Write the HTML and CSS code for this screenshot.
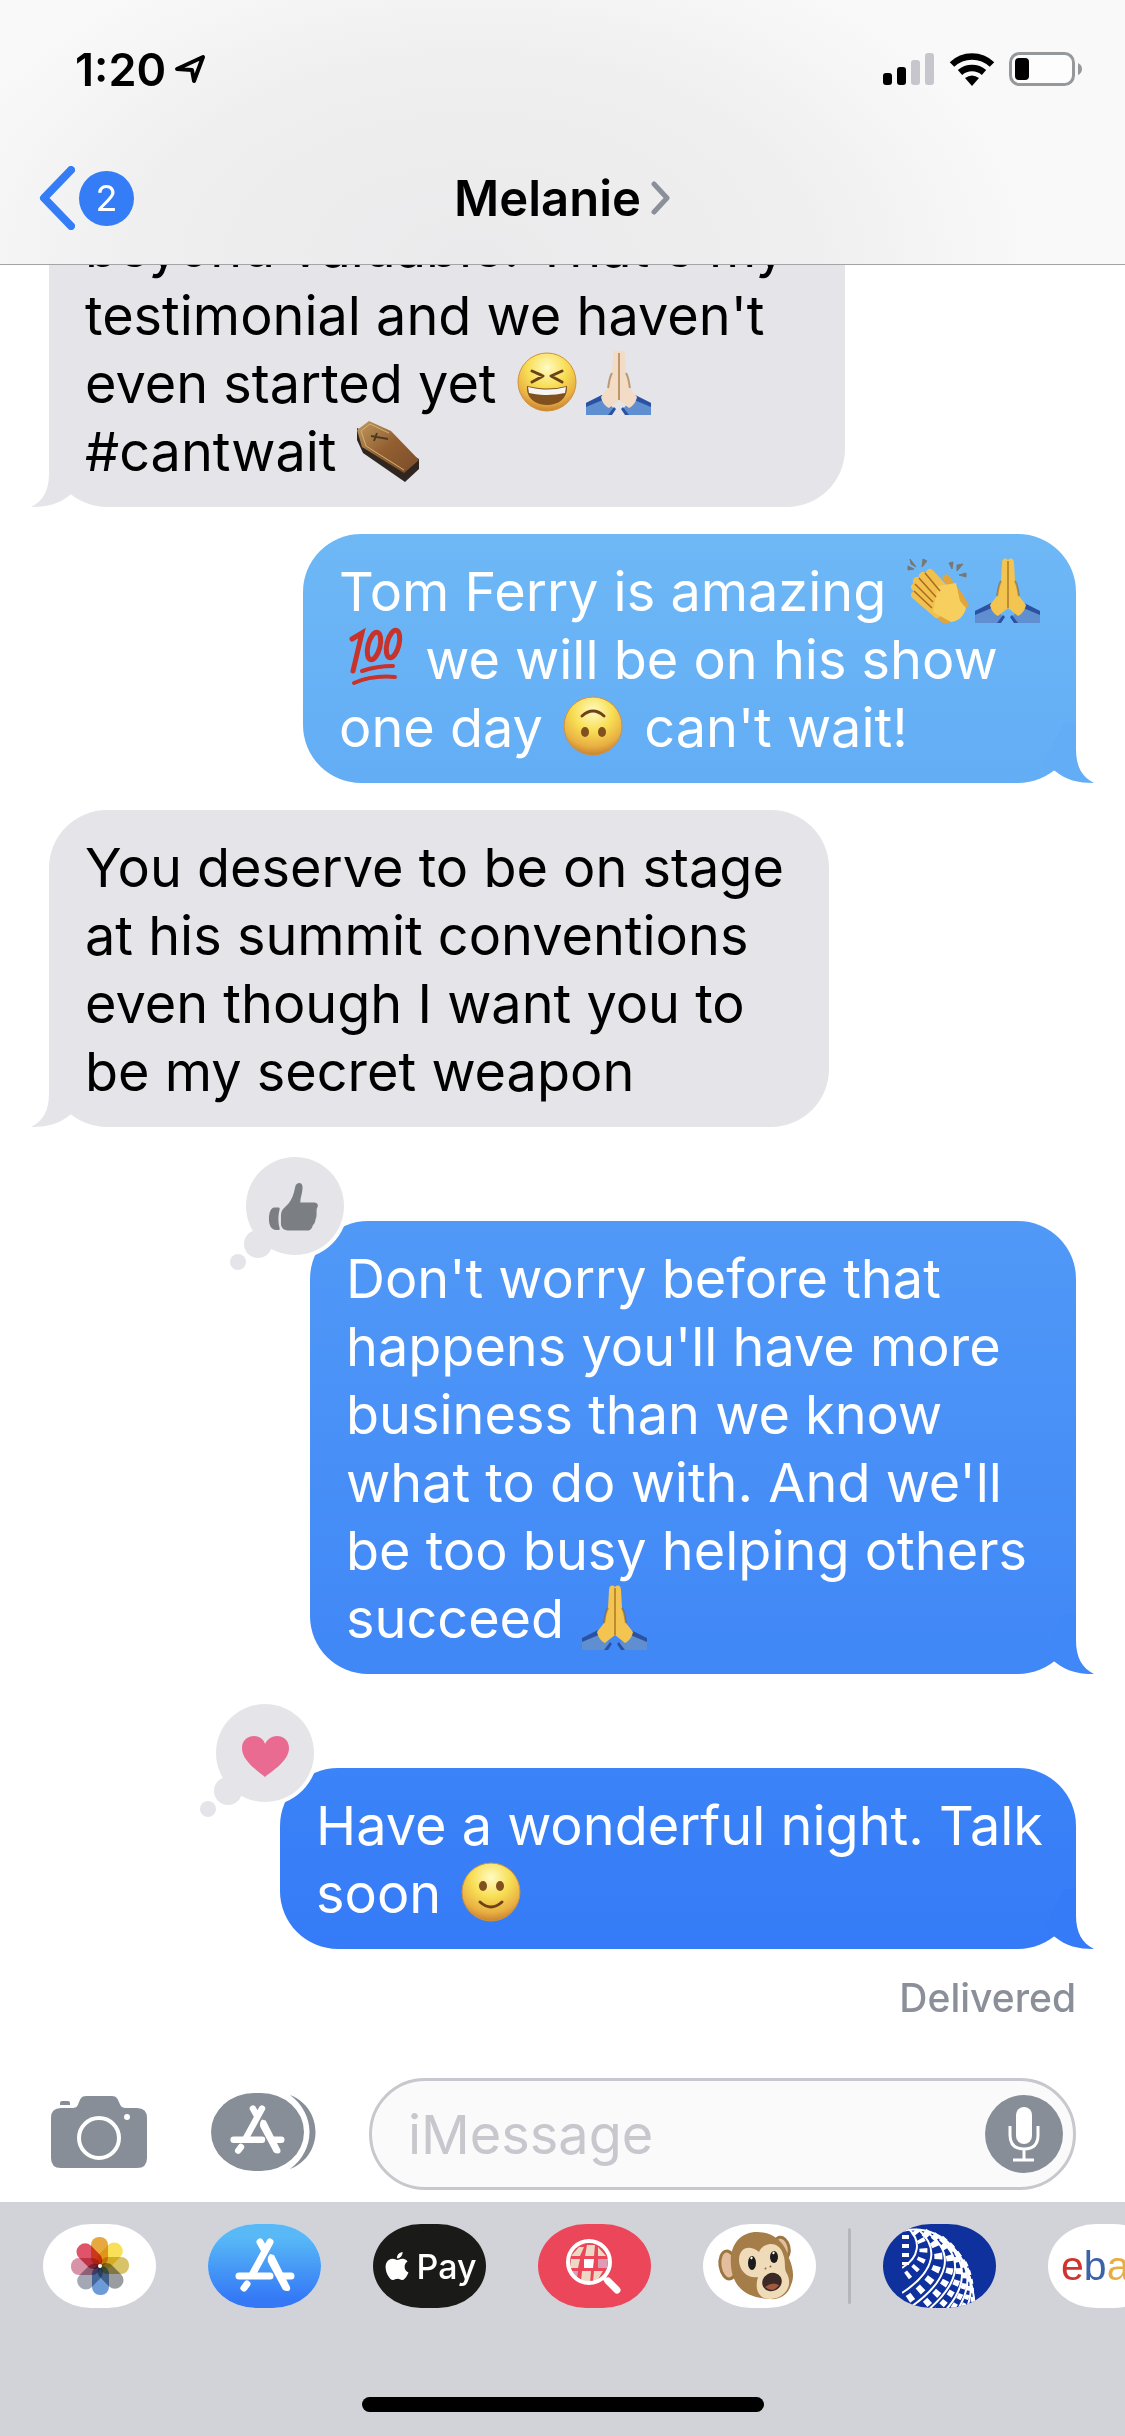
FILE: index.html
```html
<!DOCTYPE html>
<html lang="en">
<head>
    <meta charset="UTF-8">
    <meta name="viewport" content="width=device-width, initial-scale=1.0">
    <title>Messages - Melanie</title>
    <link rel="stylesheet" href="styles.css">
</head>
<body>
    <!-- shared drawings -->
    <svg class="sprites" aria-hidden="true">
        <defs>
            <radialGradient id="faceFill" cx="50%" cy="25%" r="75%">
                <stop offset="0" stop-color="#fffbc4"/>
                <stop offset=".45" stop-color="#f8de54"/>
                <stop offset=".8" stop-color="#e9b043"/>
                <stop offset="1" stop-color="#c98330"/>
            </radialGradient>
            <linearGradient id="storeFill" x1="0" y1="0" x2="0" y2="1">
                <stop offset=".15" stop-color="#58b9f6"/>
                <stop offset=".9" stop-color="#3478f6"/>
            </linearGradient>
            <linearGradient id="coffinFill" x1="0" y1="0" x2="1" y2="1">
                <stop offset="0" stop-color="#c09a60"/>
                <stop offset=".5" stop-color="#925f30"/>
                <stop offset="1" stop-color="#7c4c2a"/>
            </linearGradient>
        </defs>

        <symbol id="laugh" viewBox="0 0 65 65">
            <circle cx="32" cy="32" r="29" fill="url(#faceFill)" stroke="#d2913a"/>
            <path d="M17 21l11 5-11 6M47 21l-11 5 11 6" fill="none" stroke="#6e4218" stroke-width="3" stroke-linecap="round" stroke-linejoin="round"/>
            <path d="M12 36q20 5 40 0c1 12-8 19-20 19s-21-7-20-19z" fill="#81501f"/>
            <path d="M13 37q19 5 38 0l-1 6q-18 4-36 0z" fill="#f5f5f5"/>
        </symbol>

        <symbol id="pray" viewBox="0 0 65 65">
            <path d="M0 53l16-8 12 14-5 6H0zM65 53l-16-8-12 14 5 6h23z" fill="#5f8fd0"/>
            <path d="M0 53l16-8 3 4-19 8zM65 53l-16-8-3 4 19 8zM22 65l6-8 2 2-4 6zM43 65l-6-8-2 2 4 6z" fill="#2b51a3"/>
            <path d="M33 2c-3-3-6-1-6 3l-1 18c-3 5-3 11-4 15l-7 9c1 5 4 9 8 11l10-8zM33 2c3-3 6-1 6 3l1 18c3 5 3 11 4 15l7 9c-1 5-4 9-8 11l-10-8z" fill="currentColor"/>
            <path d="M33 3v47M26 23c-3 5-3 11-4 15M40 23c3 5 3 11 4 15" fill="none" stroke="#8a5310" stroke-opacity=".5" stroke-width="2"/>
        </symbol>

        <symbol id="coffin" viewBox="0 0 65 65">
            <path d="M2 14v12l6 13 42 29 14-13V45z" fill="#2f2620" transform="translate(0 -4)"/>
            <path d="M2 12L14 3l22 10 28 29-15 13L7 29z" fill="url(#coffinFill)"/>
            <path d="M6 13l9-7 19 9M6 13l5 15 38 24" fill="none" stroke="#d2b277" stroke-width="1"/>
            <path d="M16 18l17 3M22 15l-3 8" stroke="#4d3a26" stroke-width="2"/>
        </symbol>

        <symbol id="clap" viewBox="0 0 65 65">
            <path d="M4 8l6 3-6 1zM6 1l6 8-5-3zM19 1l4 2-5 6zM45 5l4-1-1 7zM59 6l-6 7V7zM62 19l-7-2 7-2z" fill="#777" stroke="#777"/>
            <path d="M42 20l13 17 6 10M36 58l6 5" stroke="#e1a53b" stroke-width="7" stroke-linecap="round"/>
            <path d="M26 15l22 24M19 18l24 26M13 23l26 26M11 29l24 24M11 37l22 19" stroke="#f2c04d" stroke-width="8" stroke-linecap="round"/>
            <path d="M34 28l18-3 4 18 6 7c-2 9-8 13-15 14l-18-10z" fill="#f7cf5e"/>
            <path d="M21 15l15 18M15 20l17 19M11 26l18 18M10 33l18 17" stroke="#a96b22" stroke-width="1.5"/>
        </symbol>

        <symbol id="hundred" viewBox="0 0 65 65">
            <g fill="none" stroke="#c7322a" stroke-linecap="round">
                <path d="M10 13l10-6-9 38" stroke-width="5"/>
                <ellipse cx="32" cy="20" rx="6" ry="14" transform="rotate(14 32 20)" stroke-width="5"/>
                <ellipse cx="51" cy="18" rx="6" ry="14" transform="rotate(14 51 18)" stroke-width="5"/>
                <path d="M20 45q15-5 31-5M12 57q18-8 41-6" stroke-width="4"/>
            </g>
        </symbol>

        <symbol id="upside" viewBox="0 0 65 65">
            <circle cx="32" cy="32" r="29" fill="url(#faceFill)" stroke="#d2913a"/>
            <path d="M21 22q11-10 22 0" fill="none" stroke="#6e4218" stroke-width="3" stroke-linecap="round"/>
            <ellipse cx="24" cy="38" rx="4" ry="5" fill="#81501f"/>
            <ellipse cx="41" cy="38" rx="4" ry="5" fill="#81501f"/>
        </symbol>

        <symbol id="smile" viewBox="0 0 65 65">
            <circle cx="32" cy="32" r="29" fill="url(#faceFill)" stroke="#d2913a"/>
            <path d="M21 42q11 10 22 0" fill="none" stroke="#6e4218" stroke-width="3" stroke-linecap="round"/>
            <ellipse cx="24" cy="26" rx="4" ry="5" fill="#81501f"/>
            <ellipse cx="41" cy="26" rx="4" ry="5" fill="#81501f"/>
        </symbol>

        <symbol id="tail" viewBox="0 0 60 60">
            <path d="M42 0v26c0 18 6 28 18 34-16 0-28-3-39-12L10 40 30 0z" fill="currentColor"/>
        </symbol>

        <symbol id="thought" viewBox="0 0 120 118">
            <circle cx="67" cy="52" r="53" fill="#fff"/>
            <g fill="#e5e4e9">
                <circle cx="67" cy="52" r="49"/>
                <circle cx="30" cy="90" r="14"/>
                <circle cx="10" cy="108" r="8"/>
            </g>
        </symbol>

        <symbol id="storeGlyph" viewBox="0 0 113 84">
            <g fill="none" stroke="#fff" stroke-width="7" stroke-linecap="round">
                <path d="M62 18L44 51M52 18l5 9"/>
                <path d="M31 52h31M75 52h8"/>
                <path d="M39 60l-3 4"/>
            </g>
            <path d="M62 30l4 1 16 32q1 4-3 4-4 0-5-3L60 38q-1-5 2-8z" fill="#fff"/>
        </symbol>
    </svg>

    <header>
        <div class="status">
            <div class="status-left">
                <span class="clock">1:20</span>
                <svg width="32" height="30" viewBox="0 0 32 30" aria-label="Location"><path d="M3 15L29 3 20 27l-2-11z" fill="none" stroke="#000" stroke-width="4" stroke-linejoin="round"/></svg>
            </div>
            <div class="status-right">
                <svg width="52" height="34" viewBox="0 0 52 34" aria-label="Signal">
                    <rect x="0" y="21" width="9" height="12" rx="3"/>
                    <rect x="14" y="15" width="9" height="18" rx="3"/>
                    <rect x="28" y="8" width="9" height="25" rx="3" fill="#c7c6cc"/>
                    <rect x="42" y="1" width="9" height="32" rx="3" fill="#c7c6cc"/>
                </svg>
                <svg width="46" height="34" viewBox="0 0 46 34" aria-label="Wi-Fi">
                    <path d="M3 12.500a29 29 0 0 1 40 0M11 20.500a18 18 0 0 1 24 0" fill="none" stroke="#000" stroke-width="6.500"/>
                    <path d="M16 26q7-5 14 0l-7 8z"/>
                </svg>
                <svg width="74" height="34" viewBox="0 0 74 34" aria-label="Battery">
                    <rect x="1.500" y="1.500" width="63" height="31" rx="9" fill="#fdfdfd" stroke="#96999c" stroke-width="3"/>
                    <rect x="6" y="6" width="14" height="22" rx="4"/>
                    <path d="M69 11q4 2 4 6t-4 6z" fill="#96999c"/>
                </svg>
            </div>
        </div>
        <nav>
            <a class="back" href="#" aria-label="Back, 2 unread">
                <svg width="36" height="64" viewBox="0 0 36 64"><path d="M32 4L5 32l27 28" fill="none" stroke="#357cf7" stroke-width="8" stroke-linecap="round" stroke-linejoin="round"/></svg>
                <span class="unread">2</span>
            </a>
            <a class="contact" href="#">
                <h1>Melanie</h1>
                <svg width="20" height="34" viewBox="0 0 20 34"><path d="M3 3l13 14L3 31" fill="none" stroke="#8a8f99" stroke-width="5" stroke-linecap="round" stroke-linejoin="round"/></svg>
            </a>
        </nav>
    </header>

    <main>
        <div class="bubble received wide">
            beyond valuable. That's my<br>
            testimonial and we haven't<br>
            even started yet <svg class="emoji" role="img" aria-label="laughing"><use href="#laugh"/></svg><svg class="emoji pale" role="img" aria-label="folded hands"><use href="#pray"/></svg><br>
            #cantwait <svg class="emoji" role="img" aria-label="coffin"><use href="#coffin"/></svg>
            <svg class="tail"><use href="#tail"/></svg>
        </div>

        <div class="bubble sent light">
            Tom Ferry is amazing <svg class="emoji" role="img" aria-label="clapping"><use href="#clap"/></svg><svg class="emoji" role="img" aria-label="folded hands"><use href="#pray"/></svg><br>
            <svg class="emoji" role="img" aria-label="100"><use href="#hundred"/></svg> we will be on his show<br>
            one day <svg class="emoji" role="img" aria-label="upside-down face"><use href="#upside"/></svg> can't wait!
            <svg class="tail"><use href="#tail"/></svg>
        </div>

        <div class="bubble received">
            You deserve to be on stage<br>
            at his summit conventions<br>
            even though I want you to<br>
            be my secret weapon
            <svg class="tail"><use href="#tail"/></svg>
        </div>

        <div class="bubble sent medium reacted">
            Don't worry before that<br>
            happens you'll have more<br>
            business than we know<br>
            what to do with. And we'll<br>
            be too busy helping others<br>
            succeed <svg class="emoji" role="img" aria-label="folded hands"><use href="#pray"/></svg>
            <svg class="tail"><use href="#tail"/></svg>
            <svg class="reaction" viewBox="0 0 120 118" role="img" aria-label="Liked">
                <use href="#thought"/>
                <g transform="translate(-8 -9) scale(.333)" fill="#7b7e83">
                    <path d="M163 188c-10 0-16 16-16 34s6 33 22 33h8c2 0 3-2 2-5-5-18-5-38 0-57 1-3-1-5-4-5z"/>
                    <path d="M183 215c0-15 5-22 14-30 12-10 20-24 25-42l4-18c3-14 22-16 22 2 0 18-7 30-7 46h42c12 0 13 12 8 17-1 5-1 8-1 12 0 10 0 16-3 20-1 10-4 16-8 18-3 14-10 17-18 17h-52c-18 0-26-8-26-22z"/>
                </g>
            </svg>
        </div>

        <div class="bubble sent dark reacted">
            Have a wonderful night. Talk<br>
            soon <svg class="emoji" role="img" aria-label="smiling"><use href="#smile"/></svg>
            <svg class="tail"><use href="#tail"/></svg>
            <svg class="reaction" viewBox="0 0 120 118" role="img" aria-label="Loved">
                <use href="#thought"/>
                <path d="M67 76C60 70 44 60 44 47c0-8 6-12 12-12s10 4 11 8c2-4 6-8 12-8s12 4 12 12c0 13-17 23-24 29z" fill="#e96b92"/>
            </svg>
        </div>
        <p class="receipt">Delivered</p>
    </main>

    <form class="compose">
        <button type="button" aria-label="Camera">
            <svg width="96" height="72" viewBox="0 0 96 72">
                <path d="M10 12h12c8 0 4-12 13-12h26c9 0 5 12 14 12h11q10 0 10 10v40q0 10-10 10H10Q0 72 0 62V22q0-10 10-10zM9 9V7q0-2 2-2h6q2 0 2 2v2z" fill="#878e98"/>
                <circle cx="48" cy="42" r="20" fill="none" stroke="#fff" stroke-width="4"/>
                <circle cx="76" cy="21" r="3" fill="#fff"/>
            </svg>
        </button>
        <button type="button" aria-label="Apps">
            <svg width="105" height="78" viewBox="0 0 105 78">
                <path d="M79 2c34 13 34 61 0 74 26-19 26-55 0-74z" fill="#878e98"/>
                <rect width="93" height="78" rx="43" ry="39" fill="#878e98"/>
                <use href="#storeGlyph" x="-6" y="-1" width="104" height="77"/>
            </svg>
        </button>
        <div class="field">
            <input type="text" placeholder="iMessage" aria-label="iMessage">
            <button type="button" aria-label="Record audio">
                <svg width="78" height="78" viewBox="0 0 78 78">
                    <circle cx="39" cy="39" r="39" fill="#878e98"/>
                    <rect x="31" y="12" width="16" height="37" rx="8" fill="#fff"/>
                    <path d="M25 31v9q0 14 14 14t14-14v-9M39 54v11M28 65h21" fill="none" stroke="#fff" stroke-width="3"/>
                </svg>
            </button>
        </div>
    </form>

    <footer>
        <div class="apps">
            <button class="app" aria-label="Photos">
                <svg viewBox="0 0 113 84">
                    <g class="petals">
                        <rect x="48" y="13" width="17" height="29" rx="8" fill="#e7a93f"/>
                        <rect x="48" y="13" width="17" height="29" rx="8" fill="#f8e158" transform="rotate(45 57 42)"/>
                        <rect x="48" y="13" width="17" height="29" rx="8" fill="#d9c368" transform="rotate(90 57 42)"/>
                        <rect x="48" y="13" width="17" height="29" rx="8" fill="#9a9c9f" transform="rotate(135 57 42)"/>
                        <rect x="48" y="13" width="17" height="29" rx="8" fill="#6d9bd8" transform="rotate(180 57 42)"/>
                        <rect x="48" y="13" width="17" height="29" rx="8" fill="#a3a8b4" transform="rotate(225 57 42)"/>
                        <rect x="48" y="13" width="17" height="29" rx="8" fill="#d993a8" transform="rotate(270 57 42)"/>
                        <rect x="48" y="13" width="17" height="29" rx="8" fill="#e0546a" transform="rotate(315 57 42)"/>
                    </g>
                    <circle cx="57" cy="42" r="2" fill="#fff"/>
                </svg>
            </button>
            <button class="app" aria-label="App Store">
                <svg viewBox="0 0 113 84">
                    <rect width="113" height="84" fill="url(#storeFill)"/>
                    <use href="#storeGlyph"/>
                </svg>
            </button>
            <button class="app pay">
                <svg class="apple" viewBox="0 0 24 24" aria-hidden="true"><path fill="#fff" d="M12.152 6.896c-.948 0-2.415-1.078-3.960-1.040-2.040.027-3.910 1.183-4.961 3.014-2.117 3.675-.546 9.103 1.519 12.090 1.013 1.454 2.208 3.090 3.792 3.039 1.520-.065 2.090-.987 3.935-.987 1.831 0 2.350.987 3.960.948 1.637-.026 2.676-1.480 3.676-2.948 1.156-1.688 1.636-3.325 1.662-3.415-.039-.013-3.182-1.221-3.220-4.857-.026-3.040 2.480-4.494 2.597-4.559-1.429-2.090-3.623-2.324-4.390-2.376-2-.156-3.675 1.090-4.610 1.090zM15.530 3.830c.843-1.012 1.400-2.427 1.245-3.830-1.207.052-2.662.805-3.532 1.818-.780.896-1.454 2.338-1.273 3.714 1.338.104 2.715-.688 3.559-1.701"/></svg>
                Pay
            </button>
            <button class="app images" aria-label="Image search">
                <svg viewBox="0 0 113 84">
                    <g fill="#ecd9c4">
                        <path d="M46 23h-5l-8 9h9zM49 21h8l-1 11h-9zM60 23l8 9h-8z"/>
                        <path d="M33 35h9l-2 9h-8zM44 47h9l-1 12-9-2zM56 47h9l-6 10h-4z"/>
                    </g>
                    <path d="M46 35h10l-1 9h-9z" fill="#fff"/>
                    <path d="M60 35h10l-1 9h-9zM32 47h8l-1 8q-5-3-7-8z" fill="#de9cb4"/>
                    <circle cx="51" cy="38" r="21" fill="none" stroke="#fff" stroke-width="4"/>
                    <path d="M66 54l4 4" stroke="#fff" stroke-width="4"/>
                    <path d="M70 57l9 9" stroke="#fff" stroke-width="7" stroke-linecap="round"/>
                </svg>
            </button>
            <button class="app" aria-label="Animoji">
                <svg viewBox="0 0 113 84">
                    <ellipse cx="25" cy="41" rx="8" ry="14" fill="#e3bd9e" stroke="#9b7640" stroke-width="3" transform="rotate(-8 25 41)"/>
                    <ellipse cx="79" cy="24" rx="7" ry="11" fill="#e3bd9e" stroke="#9b7640" stroke-width="3" transform="rotate(-14 79 24)"/>
                    <path d="M28 42C26 20 38 8 54 8c16 0 28 10 32 26 5 12 5 20 2 27-3 10-12 15-21 14C44 74 30 64 28 42z" fill="#a47d48"/>
                    <path d="M36 36c0-12 10-16 20-8 4-10 20-12 24 2 3 7 1 13 3 18 8 12 0 26-15 27-12 1-17-10-13-22-10 2-19-6-19-17z" fill="#f0dbb9"/>
                    <ellipse cx="49" cy="39" rx="4" ry="7" fill="#1c1c1c"/>
                    <ellipse cx="71" cy="33" rx="4" ry="6" fill="#1c1c1c"/>
                    <path d="M48 35l1-2M70 30l1-2" stroke="#fff" stroke-width="2"/>
                    <path d="M62 44l1 1M67 42l1 1" stroke="#8a6840" stroke-width="2"/>
                    <ellipse cx="69" cy="58" rx="10" ry="9" fill="#3a2924" transform="rotate(-30 69 58)"/>
                    <path d="M62 63q7-6 14-2-6 9-14 2z" fill="#a1583d"/>
                </svg>
            </button>
            <span class="divider"></span>
            <button class="app united" aria-label="United">
                <svg viewBox="0 0 113 84">
                    <svg x="19" y="0" width="94" height="84" viewBox="19 0 94 84">
                        <g fill="none" stroke="#fff" stroke-width="2">
                            <path d="M19 7c37-8 69 20 73 77"/>
                            <path d="M26 5c12 12 11 28-7 39"/>
                            <path d="M36 6c19 17 18 40-17 63"/>
                            <path d="M45 9c26 19 24 46-20 76"/>
                            <path d="M54 12c27 22 24 46-10 75"/>
                            <path d="M62 17c24 22 22 47-2 72"/>
                            <path d="M70 24c19 21 18 40 4 63"/>
                            <path d="M78 34c11 16 13 33 5 52"/>
                        </g>
                        <g fill="none" stroke="#fff">
                            <path d="M19 11v30" stroke-width="14" stroke-dasharray="4 5"/>
                            <path d="M31 7c15 15 13 32-12 48" stroke-width="8" stroke-dasharray="4 6"/>
                            <path d="M41 8c23 18 20 44-20 70" stroke-width="8" stroke-dasharray="6 7"/>
                            <path d="M50 11c26 20 24 46-15 75" stroke-width="7" stroke-dasharray="6 7"/>
                            <path d="M58 14c26 22 23 46-6 74" stroke-width="6" stroke-dasharray="6 6"/>
                            <path d="M66 20c22 22 20 43 1 68" stroke-width="5" stroke-dasharray="6 5"/>
                            <path d="M74 29c16 18 15 36 5 56" stroke-width="4" stroke-dasharray="5 4"/>
                            <path d="M82 38c8 16 9 32 6 48" stroke-width="3" stroke-dasharray="5 4"/>
                        </g>
                    </svg>
                </svg>
            </button>
            <button class="app ebay"><span class="e">e</span><span class="b">b</span><span class="a">a</span><span class="y">y</span></button>
        </div>
        <div class="home-bar"></div>
    </footer>
</body>
</html>
```

FILE: styles.css
```css
* {
    box-sizing: border-box;
}

body {
    font-family: Inter, 'Liberation Sans', sans-serif;
    background-color: #fff;
    color: #000;
    margin: 0;
    height: 100vh;
    display: flex;
    flex-direction: column;
    overflow: hidden;
}

svg {
    display: block;
    flex-shrink: 0;
}

button {
    background: none;
    border: none;
    padding: 0;
    font-family: inherit;
    cursor: pointer;
}

.sprites {
    position: absolute;
    width: 0;
    height: 0;
}

/* Header */
header {
    flex-shrink: 0;
    border-bottom: 1px solid #a4a4a8;
    background: radial-gradient(ellipse 50% 130% at 42% 100%, #eaeaec 0%, #efefef 60%, #f9f9f9 100%);
}

.status {
    display: flex;
    justify-content: space-between;
    align-items: center;
    height: 132px;
    padding: 6px 42px 0 75px;
}

.status-left,
.status-right {
    display: flex;
    align-items: center;
}

.status-left {
    gap: 8px;
}

.status-right {
    gap: 14px;
}

.clock {
    font-size: 45px;
    font-weight: 600;
}

nav {
    display: grid;
    grid-template-columns: 1fr auto 1fr;
    align-items: center;
    height: 132px;
    padding: 0 39px;
}

nav a {
    display: flex;
    align-items: center;
    color: inherit;
    text-decoration: none;
}

.back {
    gap: 4px;
}

.unread {
    width: 55px;
    height: 55px;
    line-height: 55px;
    border-radius: 50%;
    background-color: #357cf7;
    color: #fff;
    font-size: 36px;
    text-align: center;
}

.contact {
    gap: 10px;
}

h1 {
    margin: 0;
    font-size: 49px;
    font-weight: 600;
}

/* Conversation */
main {
    flex: 1;
    min-height: 0;
    overflow: hidden;
    display: flex;
    flex-direction: column;
    justify-content: flex-end;
    align-items: flex-start;
    gap: 27px;
    padding: 0 49px 58px;
}

.bubble {
    position: relative;
    flex-shrink: 0;
    width: 780px;
    max-width: 100%;
    padding: 24px 36px 21px;
    border-radius: 58px;
    font-size: 54px;
    line-height: 68px;
    white-space: nowrap;
}

.received {
    background-color: #e5e4e9;
}

.wide {
    width: 796px;
}

.sent {
    align-self: flex-end;
    color: #fff;
}

.light {
    width: 773px;
    background: linear-gradient(#6eb8f6, #62adf5);
}

.medium {
    width: 766px;
    background: linear-gradient(#5099f7, #4087f7);
}

.dark {
    width: 796px;
    background: linear-gradient(#3b83f8, #357bf7);
}

.reacted {
    margin-top: 67px;
}

.emoji {
    display: inline-block;
    width: 65px;
    height: 65px;
    margin: 0 3px;
    vertical-align: -12px;
    color: #f3c44f;
}

.pale {
    color: #f3dcc5;
}

.tail {
    position: absolute;
    right: -18px;
    bottom: 0;
    width: 60px;
    height: 60px;
}

.received .tail {
    right: auto;
    left: -18px;
    transform: scaleX(-1);
    color: #e5e4e9;
}

.light .tail {
    color: #62adf5;
}

.medium .tail {
    color: #4087f7;
}

.dark .tail {
    color: #357bf7;
}

.reaction {
    position: absolute;
    left: -82px;
    top: -67px;
    width: 120px;
    height: 118px;
}

.receipt {
    align-self: flex-end;
    margin: 0;
    font-size: 39px;
    line-height: 44px;
    font-weight: 500;
    color: #8a8f99;
}

/* Message box */
.compose {
    flex-shrink: 0;
    display: flex;
    align-items: center;
    padding: 0 49px 12px 51px;
}

.compose > button {
    margin-right: 64px;
    padding-bottom: 4px;
}

.compose > button + button {
    margin-right: 53px;
}

.field {
    flex: 1;
    min-width: 0;
    display: flex;
    align-items: center;
    height: 112px;
    padding: 0 10px 0 36px;
    border: 3px solid #c7c7cd;
    border-radius: 56px;
    background-color: #fafafa;
}

.field input {
    flex: 1;
    min-width: 0;
    padding: 0;
    border: none;
    outline: none;
    background: none;
    font-family: inherit;
    font-size: 54px;
}

.field input::placeholder {
    color: #c7c7cd;
    opacity: 1;
}

/* App drawer */
footer {
    flex-shrink: 0;
    padding: 22px 0 24px;
    background-color: #d2d3d8;
    overflow: hidden;
}

.apps {
    display: flex;
    align-items: center;
    gap: 52px;
    padding-left: 43px;
}

.app {
    flex-shrink: 0;
    display: flex;
    align-items: center;
    justify-content: center;
    width: 113px;
    height: 84px;
    border-radius: 48px / 42px;
    background-color: #fff;
    overflow: hidden;
}

.petals rect {
    mix-blend-mode: multiply;
}

.pay {
    gap: 6px;
    background-color: #1a1a18;
    color: #fff;
    font-size: 34px;
    font-weight: 500;
}

.apple {
    width: 28px;
    height: 28px;
}

.images {
    background-color: #ec465b;
}

.united {
    background-color: #0f319e;
}

.ebay {
    justify-content: flex-start;
    padding-left: 13px;
    font-family: 'Liberation Sans', sans-serif;
    font-size: 41px;
}

.e { color: #cf352e; }
.b { color: #3c62a8; }
.a { color: #e9ac3e; }
.y { color: #8db63c; }

.divider {
    flex-shrink: 0;
    width: 3px;
    height: 76px;
    margin: 0 -20px;
    border-radius: 2px;
    background-color: #b5b6bb;
}

.home-bar {
    width: 402px;
    height: 15px;
    margin: 89px auto 0;
    border-radius: 8px;
    background-color: #000;
}
```
